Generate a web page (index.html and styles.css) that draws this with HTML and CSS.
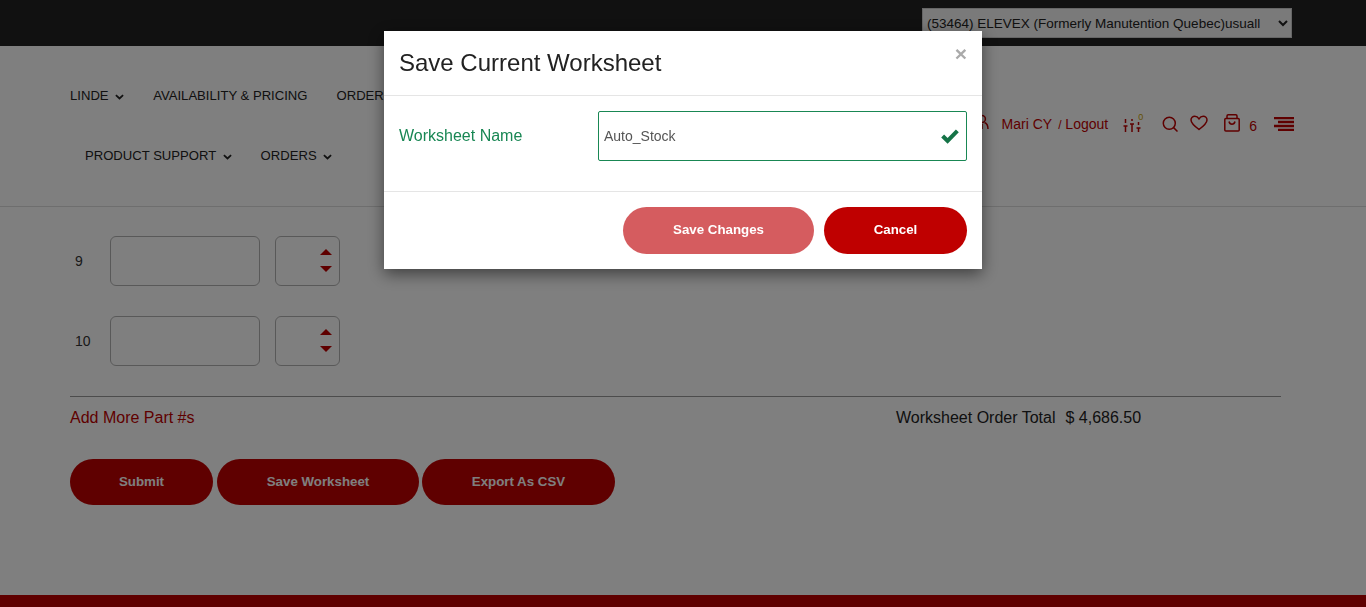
FILE: index.html
```html
<!DOCTYPE html>
<html lang="en">
<head>
    <meta charset="UTF-8">
    <meta name="viewport" content="width=device-width, initial-scale=1.0">
    <title>Worksheet</title>
    <link rel="stylesheet" href="styles.css">
</head>
<body>
    <div class="topbar">
        <select class="account-select">
            <option>(53464) ELEVEX (Formerly Manutention Quebec)usuall</option>
        </select>
    </div>

    <header class="site-header">
        <nav class="main-nav">
            <div class="nav-row">
                <a class="nav-link">LINDE <svg class="caret" viewBox="0 0 10 6"><path d="M1 1l4 3.600L9 1" /></svg></a>
                <a class="nav-link">AVAILABILITY &amp; PRICING</a>
                <a class="nav-link">ORDER</a>
            </div>
            <div class="nav-row nav-row-second">
                <a class="nav-link">PRODUCT SUPPORT <svg class="caret" viewBox="0 0 10 6"><path d="M1 1l4 3.600L9 1" /></svg></a>
                <a class="nav-link">ORDERS <svg class="caret" viewBox="0 0 10 6"><path d="M1 1l4 3.600L9 1" /></svg></a>
            </div>
        </nav>
        <div class="user-tools">
            <svg class="tool-icon icon-user" viewBox="0 0 16 16"><circle cx="8" cy="5" r="3.400" /><path d="M2 15c0-4 2-6 3.500-6.500M14 15c0-4-2-6-3.500-6.500M8 10v5" /></svg>
            <span class="user-name">Mari CY</span>
            <span class="user-logout"><small>/</small> Logout</span>
            <span class="filter-wrap">
                <svg class="tool-icon icon-filter" viewBox="0 0 18 16"><path d="M2.500 2v4M2.500 9v6M0.500 9h4M9 2v2M9 7v8M7 7h4M15.500 5v3M15.500 11v4M13.500 11h4" /></svg>
                <span class="filter-count">0</span>
            </span>
            <svg class="tool-icon icon-search" viewBox="0 0 16 16"><circle cx="7.300" cy="7.300" r="6" /><path d="M11.600 11.600L15.500 15.500" /></svg>
            <svg class="tool-icon icon-heart" viewBox="0 0 18 16"><path d="M9 14.500C4 10.800 1 8.200 1 5c0-2.200 1.700-3.800 3.800-3.800C6.600 1.200 8 2.200 9 3.800c1-1.600 2.400-2.600 4.200-2.600C15.300 1.200 17 2.800 17 5c0 3.200-3 5.800-8 9.500z" /></svg>
            <svg class="tool-icon icon-bag" viewBox="0 0 16 18"><path d="M3 4.500V2c0-.7.500-1.200 1.200-1.200h7.600c.7 0 1.200.5 1.200 1.200v2.500M1.800 4.500h12.400c.6 0 1 .4 1 1V16c0 .6-.4 1-1 1H1.800c-.6 0-1-.4-1-1V5.500c0-.6.4-1 1-1zM5 7.500c.4 1.800 1.500 2.700 3 2.700s2.600-.9 3-2.700" /></svg>
            <span class="cart-count">6</span>
            <svg class="icon-menu" viewBox="0 0 20 14"><path d="M0 1h20M4 5h16M0 9h20M4 13h16" /></svg>
        </div>
    </header>

    <main class="worksheet">
        <div class="part-row">
            <span class="part-num">9</span>
            <div class="part-input"></div>
            <div class="qty-input"><span class="arrow-up"></span><span class="arrow-down"></span></div>
        </div>
        <div class="part-row">
            <span class="part-num">10</span>
            <div class="part-input"></div>
            <div class="qty-input"><span class="arrow-up"></span><span class="arrow-down"></span></div>
        </div>

        <div class="totals-row">
            <a class="add-more">Add More Part #s</a>
            <div class="order-total"><span>Worksheet Order Total</span><span>$ 4,686.50</span></div>
        </div>

        <div class="action-group">
            <button class="pill pill-submit">Submit</button>
            <button class="pill pill-save">Save Worksheet</button>
            <button class="pill pill-export">Export As CSV</button>
        </div>
    </main>

    <footer class="site-footer"></footer>

    <div class="backdrop"></div>
    <div class="modal">
        <div class="modal-header">
            <h2>Save Current Worksheet</h2>
            <span class="modal-close">&times;</span>
        </div>
        <div class="modal-body">
            <label class="field-label">Worksheet Name</label>
            <div class="field-box">
                <span class="field-value">Auto_Stock</span>
                <svg class="check-icon" viewBox="0 0 18 15"><path d="M6.600 14.800L0.200 8.400l2.900-2.900 3.500 3.500L14.900 0.400l2.900 2.900z" /></svg>
            </div>
        </div>
        <div class="modal-footer">
            <button class="pill pill-faded">Save Changes</button>
            <button class="pill pill-cancel">Cancel</button>
        </div>
    </div>
</body>
</html>
```

FILE: styles.css
```css
* {
    box-sizing: border-box;
}
html, body {
    height: 607px;
    overflow: hidden;
}
body {
    margin: 0;
    font-family: 'Liberation Sans', Arial, sans-serif;
    color: #333;
    background-color: #fff;
}
.topbar {
    height: 46px;
    background-color: #222;
    padding: 8px 74px 0 0;
    display: flex;
    justify-content: flex-end;
}
.account-select {
    width: 370px;
    height: 30px;
    font-family: inherit;
    font-size: 13.5px;
    color: #222;
    background-color: #f4f4f4;
    border: 1px solid #ccc;
    padding: 0;
}
.site-header {
    height: 161px;
    border-bottom: 1px solid #ddd;
    display: flex;
    justify-content: space-between;
    padding-left: 70px;
    padding-right: 72px;
}
.main-nav {
    font-size: 13.1px;
    color: #222;
}
.nav-row {
    display: flex;
    gap: 29px;
    margin-top: 42px;
    height: 16px;
    line-height: 16px;
    width: 314px;
    white-space: nowrap;
}
.nav-row-second {
    margin-top: 44px;
    padding-left: 15px;
}
.nav-link {
    display: block;
}
.caret {
    width: 9px;
    height: 6px;
    margin-left: 3px;
    vertical-align: 0;
    fill: none;
    stroke: #222;
    stroke-width: 2;
}
.user-tools {
    display: flex;
    align-items: center;
    height: 26px;
    margin-top: 65px;
    color: #bf0000;
    font-size: 14px;
}
.tool-icon {
    fill: none;
    stroke: #bf0000;
    stroke-width: 1.500;
}
.icon-user {
    width: 16px;
    height: 16px;
    margin-right: 12px;
    margin-top: -4px;
}
.user-name {
    margin-right: 6px;
}
.user-logout small {
    font-size: 12px;
}
.filter-wrap {
    position: relative;
    margin-top: 2px;
    margin-left: 15px;
    margin-right: 21px;
    display: flex;
}
.icon-filter {
    width: 18px;
    height: 16px;
}
.filter-count {
    position: absolute;
    top: -4px;
    right: -2px;
    font-size: 9px;
    line-height: 9px;
    color: #c9a100;
}
.icon-search {
    width: 16px;
    height: 16px;
    margin-right: 12px;
}
.icon-heart {
    width: 18px;
    height: 16px;
    margin-right: 16px;
    margin-top: -3px;
}
.icon-bag {
    width: 16px;
    height: 18px;
    margin-right: 9px;
    margin-top: -3px;
}
.cart-count {
    margin-right: 17px;
    margin-top: 4px;
}
.icon-menu {
    width: 20px;
    height: 14px;
    fill: none;
    stroke: #bf0000;
    stroke-width: 2.400;
}
.worksheet {
    padding: 29px 85px 0 70px;
}
.part-row {
    display: flex;
    align-items: center;
    height: 50px;
    margin-bottom: 30px;
    font-size: 14px;
}
.part-num {
    width: 40px;
    padding-left: 5px;
}
.part-input {
    width: 150px;
    height: 50px;
    border: 1px solid #b3b3b3;
    border-radius: 6px;
    margin-right: 15px;
}
.qty-input {
    width: 65px;
    height: 50px;
    border: 1px solid #b3b3b3;
    border-radius: 6px;
    display: flex;
    flex-direction: column;
    align-items: flex-end;
    justify-content: center;
    gap: 11px;
    padding-right: 7px;
}
.arrow-up, .arrow-down {
    width: 0;
    height: 0;
    border-left: 6px solid transparent;
    border-right: 6px solid transparent;
}
.arrow-up {
    margin-top: -1px;
    border-bottom: 6px solid #bf0000;
}
.arrow-down {
    border-top: 6px solid #bf0000;
}
.totals-row {
    border-top: 1px solid #999;
    display: flex;
    justify-content: space-between;
    height: 63px;
    padding-top: 12px;
    font-size: 16px;
    line-height: 18px;
}
.add-more {
    color: #bf0000;
}
.order-total {
    display: flex;
    gap: 10px;
    width: 385px;
    color: #222;
}
.action-group {
    display: flex;
    gap: 3px;
}
.pill {
    height: 46px;
    border: none;
    border-radius: 23px;
    padding: 0 0 2px;
    color: #fff;
    background-color: #bf0000;
    font-family: 'Liberation Sans', Arial, sans-serif;
    font-size: 13.3px;
    font-weight: bold;
}
.pill-submit {
    width: 143px;
}
.pill-save {
    width: 202px;
    margin-left: 1px;
}
.pill-export {
    width: 193px;
}
.site-footer {
    position: absolute;
    left: 0;
    right: 0;
    bottom: 0;
    height: 12px;
    background-color: #bf0000;
}
.backdrop {
    position: fixed;
    inset: 0;
    background-color: rgba(0,0,0,0.5);
}
.modal {
    position: fixed;
    top: 31px;
    left: 384px;
    width: 598px;
    height: 238px;
    background-color: #fff;
    box-shadow: 0 5px 15px rgba(0,0,0,0.5);
}
.modal-header {
    height: 65px;
    border-bottom: 1px solid #e5e5e5;
    position: relative;
    padding: 17px 15px 0;
}
.modal-header h2 {
    margin: 0;
    font-size: 24px;
    font-weight: normal;
    line-height: 29px;
    color: #222;
}
.modal-close {
    position: absolute;
    top: 12px;
    right: 15px;
    font-size: 21px;
    font-weight: bold;
    line-height: 21px;
    color: #aaa;
}
.modal-body {
    height: 96px;
    border-bottom: 1px solid #e5e5e5;
    display: flex;
    padding: 15px 15px 0;
}
.field-label {
    width: 199px;
    font-size: 16px;
    line-height: 49px;
    color: #198754;
}
.field-box {
    width: 369px;
    height: 50px;
    border: 1px solid #198754;
    border-radius: 2px;
    display: flex;
    align-items: center;
    justify-content: space-between;
    padding: 0 7px 0 5px;
    font-size: 14px;
    color: #555;
}
.check-icon {
    width: 18px;
    height: 15px;
    fill: #157347;
}
.modal-footer {
    display: flex;
    justify-content: flex-end;
    gap: 10px;
    padding: 15px 15px 0;
}
.pill-faded {
    width: 191px;
    height: 47px;
    border-radius: 24px;
    background-color: #d55c5f;
}
.pill-cancel {
    width: 143px;
    height: 47px;
    border-radius: 24px;
}
```
